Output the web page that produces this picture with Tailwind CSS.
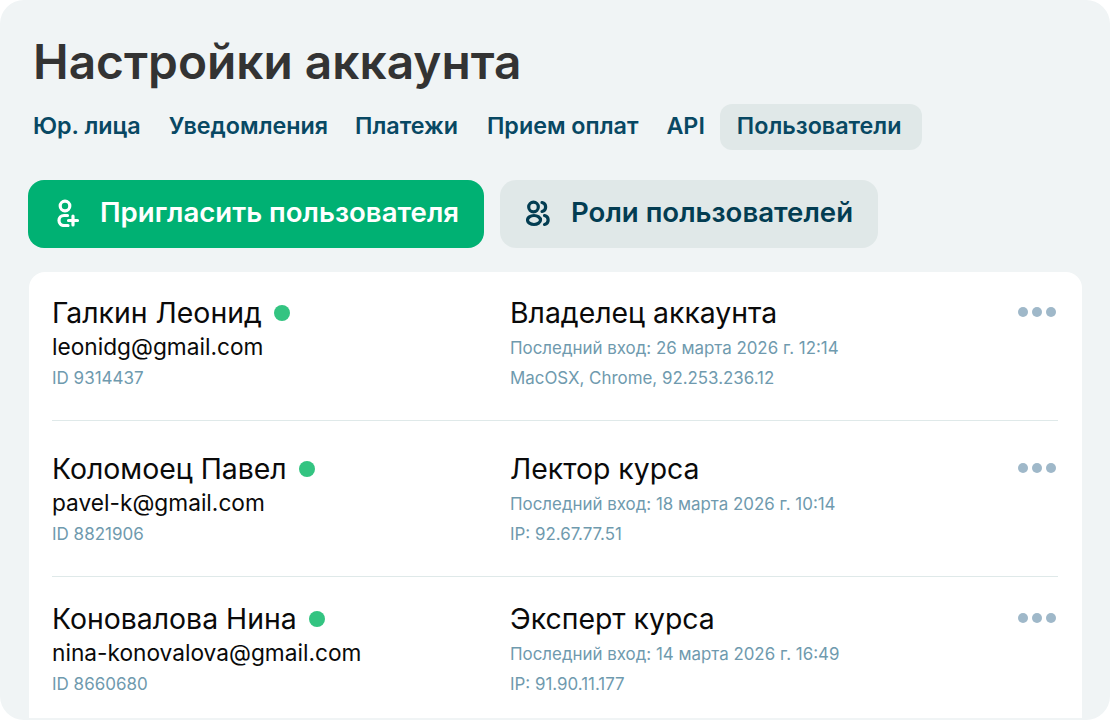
<!DOCTYPE html>
<html lang="ru">
<head>
  <meta charset="UTF-8">
  <title>Настройки аккаунта</title>
  <script src="https://cdn.jsdelivr.net/npm/@tailwindcss/browser@4"></script>
</head>
<body class="bg-white font-['Inter',sans-serif]">
  <div class="w-[1110px] h-[720px] overflow-hidden">
    <div class="h-[720px] bg-[#f0f4f5] rounded-[24px] pl-7 pr-7 flex flex-col overflow-hidden">
      <!-- Заголовок -->
      <h1 class="pl-[5px] pt-[32px] text-[47.8px] leading-[60px] font-semibold text-[#333333]">Настройки аккаунта</h1>

      <!-- Вкладки -->
      <nav class="flex items-center mt-3 pl-[5px] h-[46px] text-[23.3px] font-semibold text-[#084863]">
        <a class="mr-7 -mt-[2px]">Юр. лица</a>
        <a class="mr-[27px] -mt-[2px]">Уведомления</a>
        <a class="mr-[29px] -mt-[2px]">Платежи</a>
        <a class="mr-7 -mt-[2px]">Прием оплат</a>
        <a class="mr-[15px] -mt-[2px]">API</a>
        <a class="h-[46px] w-[202px] pl-[17px] pb-[2px] flex items-center rounded-xl bg-[#e0e8e8]">Пользователи</a>
      </nav>

      <!-- Кнопки -->
      <div class="flex gap-4 mt-[30px]">
        <button class="h-[68px] w-[456px] rounded-2xl bg-[#00b173] text-white flex items-center pl-[26px] pb-[3px] gap-[20px] text-[27.6px] font-semibold">
          <svg class="w-[26px] h-[28px]" viewBox="0 0 26 28" fill="none" stroke="currentColor" stroke-width="3.2" stroke-linecap="round">
            <circle cx="11" cy="7" r="4.8"/>
            <path d="M13.5 16.5h-3.5a5 5 0 0 0 0 10h4"/>
            <path d="M14.5 21.5h9M19 17v9"/>
          </svg>
          Пригласить пользователя
        </button>
        <button class="h-[68px] w-[378px] rounded-2xl bg-[#e0e8e8] text-[#033d52] flex items-center pl-[26px] pb-[3px] gap-[21px] text-[27.6px] font-semibold">
          <svg class="w-[24px] h-[28px]" viewBox="0 0 24 28" fill="none" stroke="currentColor" stroke-width="3.2" stroke-linecap="round">
            <circle cx="7.5" cy="8" r="4.8"/>
            <ellipse cx="8" cy="21" rx="6.5" ry="4.5"/>
            <path d="M16 3.5a4.6 4.6 0 0 1 0 9"/>
            <path d="M18.5 16.5a4.6 4.6 0 0 1 0 9"/>
          </svg>
          Роли пользователей
        </button>
      </div>

      <!-- Пользователи -->
      <section class="mt-6 ml-px h-[446px] bg-white rounded-t-2xl pl-[23px] pr-6 overflow-hidden">
        <article class="flex pt-[25px] pb-[28px] border-b border-[#dfe9e9]">
          <div class="w-[458px]">
            <div class="flex items-center gap-3 text-[28.4px] leading-[32px] text-[#0a0a0a]">Галкин Леонид <span class="w-4 h-4 rounded-full bg-[#33c481]"></span></div>
            <div class="mt-[2px] text-[22.7px] leading-[32px] text-[#0a0a0a]">leonidg@gmail.com</div>
            <div class="mt-px text-[17px] leading-[28px] text-[#6f9aae]">ID 9314437</div>
          </div>
          <div class="flex-1">
            <div class="text-[28.4px] leading-[32px] text-[#0a0a0a]">Владелец аккаунта</div>
            <div class="mt-[3px] text-[16.9px] leading-[32px] text-[#6f9aae]">Последний вход: 26 марта 2026 г. 12:14</div>
            <div class="text-[16.9px] leading-[28px] text-[#6f9aae]">MacOSX, Chrome, 92.253.236.12</div>
          </div>
          <div class="flex gap-1 h-[10px] mt-[10px] mr-[2px]">
            <span class="w-[10px] h-[10px] rounded-full bg-[#9fb8c9]"></span>
            <span class="w-[10px] h-[10px] rounded-full bg-[#9fb8c9]"></span>
            <span class="w-[10px] h-[10px] rounded-full bg-[#9fb8c9]"></span>
          </div>
        </article>

        <article class="flex pt-[32px] pb-[28px] border-b border-[#dfe9e9]">
          <div class="w-[458px]">
            <div class="flex items-center gap-3 text-[28.4px] leading-[32px] text-[#0a0a0a]">Коломоец Павел <span class="w-4 h-4 rounded-full bg-[#33c481]"></span></div>
            <div class="mt-[2px] text-[22.7px] leading-[32px] text-[#0a0a0a]">pavel-k@gmail.com</div>
            <div class="mt-px text-[17px] leading-[28px] text-[#6f9aae]">ID 8821906</div>
          </div>
          <div class="flex-1">
            <div class="text-[28.4px] leading-[32px] text-[#0a0a0a]">Лектор курса</div>
            <div class="mt-[3px] text-[16.9px] leading-[32px] text-[#6f9aae]">Последний вход: 18 марта 2026 г. 10:14</div>
            <div class="text-[16.9px] leading-[28px] text-[#6f9aae]">IP: 92.67.77.51</div>
          </div>
          <div class="flex gap-1 h-[10px] mt-[10px] mr-[2px]">
            <span class="w-[10px] h-[10px] rounded-full bg-[#9fb8c9]"></span>
            <span class="w-[10px] h-[10px] rounded-full bg-[#9fb8c9]"></span>
            <span class="w-[10px] h-[10px] rounded-full bg-[#9fb8c9]"></span>
          </div>
        </article>

        <article class="flex pt-[26px]">
          <div class="w-[458px]">
            <div class="flex items-center gap-3 text-[28.4px] leading-[32px] text-[#0a0a0a]">Коновалова Нина <span class="w-4 h-4 rounded-full bg-[#33c481]"></span></div>
            <div class="mt-[2px] text-[22.7px] leading-[32px] text-[#0a0a0a]">nina-konovalova@gmail.com</div>
            <div class="mt-px text-[17px] leading-[28px] text-[#6f9aae]">ID 8660680</div>
          </div>
          <div class="flex-1">
            <div class="text-[28.4px] leading-[32px] text-[#0a0a0a]">Эксперт курса</div>
            <div class="mt-[3px] text-[16.9px] leading-[32px] text-[#6f9aae]">Последний вход: 14 марта 2026 г. 16:49</div>
            <div class="text-[16.9px] leading-[28px] text-[#6f9aae]">IP: 91.90.11.177</div>
          </div>
          <div class="flex gap-1 h-[10px] mt-[10px] mr-[2px]">
            <span class="w-[10px] h-[10px] rounded-full bg-[#9fb8c9]"></span>
            <span class="w-[10px] h-[10px] rounded-full bg-[#9fb8c9]"></span>
            <span class="w-[10px] h-[10px] rounded-full bg-[#9fb8c9]"></span>
          </div>
        </article>
      </section>
    </div>
  </div>
</body>
</html>
